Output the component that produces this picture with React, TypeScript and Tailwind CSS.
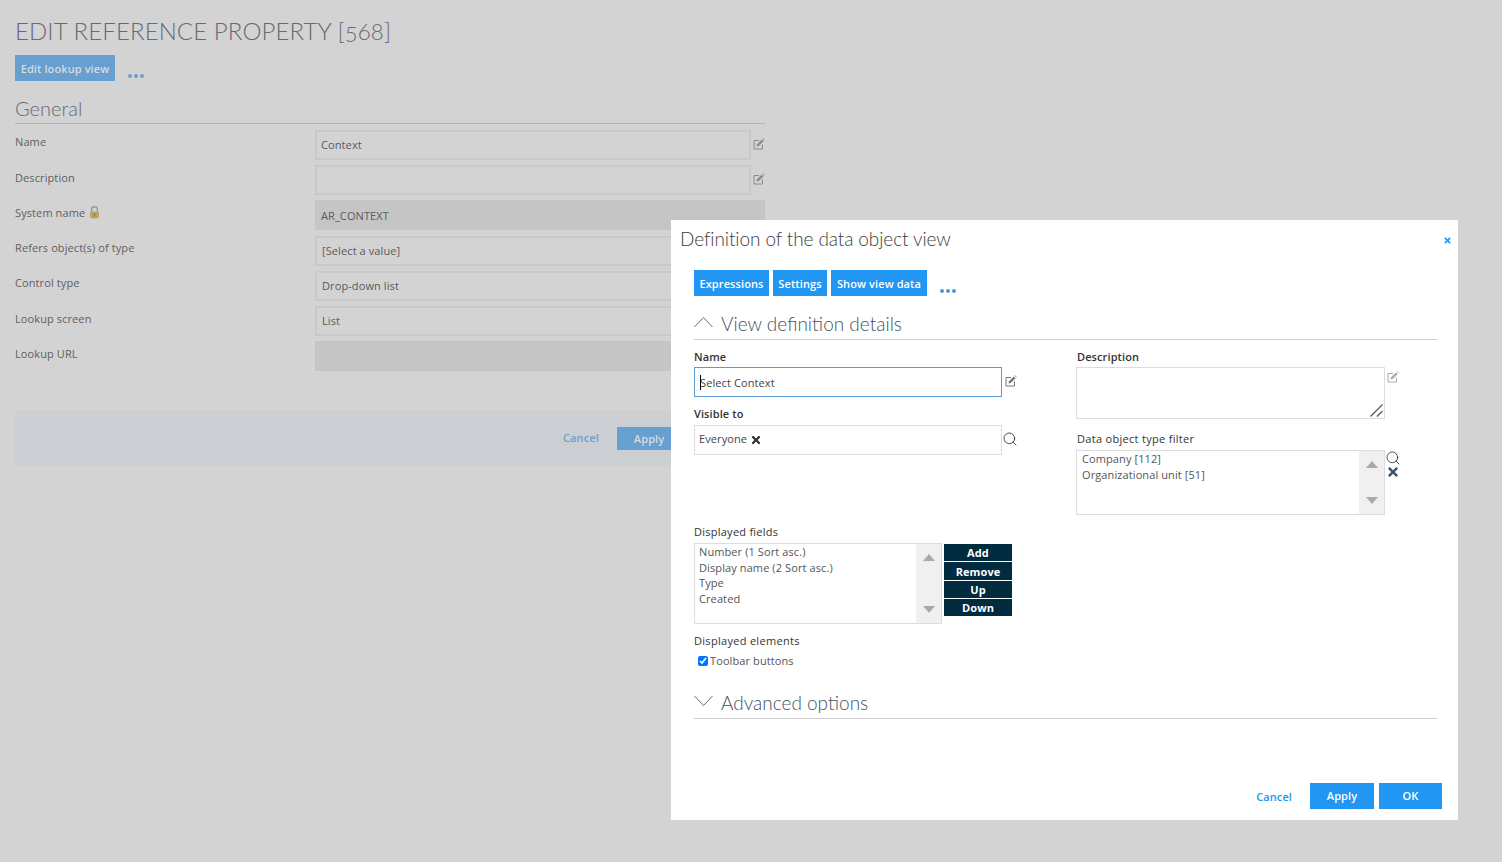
import React from "react";
import { FaTimes } from "react-icons/fa";
import { Search } from "lucide-react";

const leftRows = [
  { label: "Name", value: "Context", edit: true, pad: "pl-[4px]", labelPad: "" },
  { label: "Description", value: "", edit: true, pad: "pl-[4px]", labelPad: "pt-[1px]" },
  { label: "System name", value: "AR_CONTEXT", disabled: true, lock: true, pad: "pl-[4px] pt-[1px]", labelPad: "" },
  { label: "Refers object(s) of type", value: "[Select a value]", pad: "pl-[5px] pt-[1px]", labelPad: "" },
  { label: "Control type", value: "Drop-down list", pad: "pl-[5px]", labelPad: "" },
  { label: "Lookup screen", value: "List", pad: "pl-[5px]", labelPad: "pt-[1px]" },
  { label: "Lookup URL", value: "", disabled: true, pad: "pl-[5px]", labelPad: "pt-[1px]" },
];

const Dots = ({ className }: { className: string }) => (
  <div className={`flex gap-[2px] ${className}`}>
    <span className="w-[4px] h-[4px] rounded-full bg-current" />
    <span className="w-[4px] h-[4px] rounded-full bg-current" />
    <span className="w-[4px] h-[4px] rounded-full bg-current" />
  </div>
);

const Lock = () => (
  <svg width="11" height="13" viewBox="0 0 11 13" className="ml-[4px]">
    <path d="M2.5 6V3.8a3 3 0 0 1 6 0V6" fill="none" stroke="#9a9a8c" strokeWidth="1.4" />
    <rect x="1" y="5.5" width="9" height="7" rx="2.5" fill="#b8a661" />
    <rect x="4.8" y="7.5" width="1.4" height="3" fill="#8f8148" />
  </svg>
);

// square with a pencil leaving its top right corner
const EditIcon = ({ className }: { className: string }) => (
  <svg width="12" height="12" viewBox="0 0 12 12" className={className}>
    <path d="M6 2.5H1V11h8.5V6.5" fill="none" stroke="currentColor" strokeWidth="1" />
    <path d="M3.5 8.5 4 6.2 8.8 1.4 10.6 3.2 5.8 8z" fill="currentColor" />
    <path d="M9.5.7 10 .2 11.8 2 11.3 2.5z" fill="currentColor" />
  </svg>
);

const Scroller = () => (
  <div className="w-[25px] bg-[#f0f0f0] flex flex-col justify-between items-center py-[10px]">
    <div className="w-0 h-0 border-x-[6px] border-x-transparent border-b-[7px] border-b-[#a9a9a9]" />
    <div className="w-0 h-0 border-x-[6px] border-x-transparent border-t-[7px] border-t-[#a9a9a9]" />
  </div>
);

const Section = ({ title, open }: { title: string; open?: boolean }) => (
  <div className="flex items-start h-[29px] border-b border-[#cfcfcf] font-['Lato'] font-light text-[19px] leading-[26px] tracking-normal text-[#46525e]">
    <svg width="19" height="12" viewBox="0 0 19 12" className="mr-[8px] mt-[5px]">
      <polyline
        points={open ? "0.5,11 9.5,1.5 18.5,11" : "0.5,1 9.5,10.5 18.5,1"}
        fill="none"
        stroke="#6b6b6b"
        strokeWidth="1"
      />
    </svg>
    {title}
  </div>
);

const sideButtons = [
  { text: "Add", size: "h-[17px]" },
  { text: "Remove", size: "h-[18px]" },
  { text: "Up", size: "h-[17px]" },
  { text: "Down", size: "h-[17px]" },
];

export default function App() {
  return (
    <div className="relative w-[1502px] h-[862px] overflow-hidden bg-[#d3d3d3] font-['Open_Sans'] text-[11px] tracking-[0.1px] text-[#5a5a5a]">
      {/* Background page */}
      <div className="w-[750px] ml-[15px] pt-[16px]">
        <h1 className="font-['Lato'] font-light text-[24px] leading-[30px] tracking-[0.1px] oldstyle-nums text-[#666b70]">
          EDIT REFERENCE PROPERTY [568]
        </h1>
        <div className="flex items-end mt-[9px]">
          <button className="h-[26px] w-[100px] pt-[2px] bg-[#669fd0] text-[#d8dcdf] font-semibold">Edit lookup view</button>
          <Dots className="ml-[13px] mb-[3px] text-[#6f9fc8]" />
        </div>
        <div className="mt-[15px] h-[28px] border-b border-[#b4b4b4] font-['Lato'] font-light text-[20px] leading-[24px] tracking-normal text-[#6a6a6a]">
          General
        </div>
        <div className="mt-[6px] flex flex-col gap-[5.2px]">
          {leftRows.map((row) => (
            <div key={row.label} className="flex h-[30px]">
              <div className={`w-[300px] flex items-start text-[#5f5f5f] ${row.labelPad}`}>
                <span className="flex items-center h-[25px]">
                  {row.label}
                  {row.lock && <Lock />}
                </span>
              </div>
              <div
                className={`flex-1 flex items-center border-2 ${row.pad} ${
                  row.disabled ? "bg-[#c5c5c5] border-[#c5c5c5]" : "border-[#c9c9c9]"
                }`}
              >
                {row.value}
              </div>
              {row.edit && (
                <div className="w-[14px] flex justify-end pt-[8px] text-[#8b8b8b]">
                  <EditIcon className="shrink-0" />
                </div>
              )}
            </div>
          ))}
        </div>
        <div className="mt-[40px] h-[54px] pt-[1px] bg-[#cbced3] flex items-center pl-[548px]">
          <span className="text-[#6f9fc8] font-semibold">Cancel</span>
          <button className="ml-[18px] w-[66px] h-[23px] pt-[1px] bg-[#669fd0] text-[#d8dcdf] font-semibold text-left pl-[17px]">Apply</button>
        </div>
      </div>

      {/* Modal */}
      <div className="absolute left-[671px] top-[220px] w-[787px] h-[600px] bg-white flex flex-col text-[#444]">
        <div className="flex items-start justify-between pl-[9px] pr-[6px] pt-[6px]">
          <h2 className="font-['Lato'] font-light text-[19px] leading-[26px] tracking-[-0.1px] text-[#3c3c3c]">Definition of the data object view</h2>
          <FaTimes size={9} className="text-[#2196f3] mt-[10px]" />
        </div>

        <div className="mx-[23px] w-[743px] flex-1 flex flex-col">
          <div className="flex items-end mt-[18px] gap-[4px]">
            <button className="h-[26px] w-[75px] pt-[2px] bg-[#2196f3] text-white font-semibold">Expressions</button>
            <button className="h-[26px] w-[54px] pt-[2px] bg-[#2196f3] text-white font-semibold">Settings</button>
            <button className="h-[26px] w-[96px] pt-[2px] bg-[#2196f3] text-white font-semibold">Show view data</button>
            <Dots className="ml-[9px] mb-[3px] text-[#4f96d3]" />
          </div>

          <div className="mt-[15px]">
            <Section title="View definition details" open />
          </div>

          <div className="grid grid-cols-[382px_1fr] mt-[9px]">
            <div>
              <label className="block h-[18px] font-semibold text-[#333]">Name</label>
              <div className="flex">
                <div className="w-[308px] h-[30px] border border-[#5b9bd5] flex items-center pl-[5px] pt-[2px] relative">
                  <span className="absolute left-[5px] top-[7px] w-px h-[15px] bg-black" />
                  Select Context
                </div>
                <EditIcon className="ml-[3px] mt-[8px] text-[#777]" />
              </div>
              <label className="block mt-[9px] h-[19px] font-semibold text-[#333]">Visible to</label>
              <div className="flex">
                <div className="w-[308px] h-[30px] border border-[#ddd] flex items-center pl-[4px] pb-[1px]">
                  Everyone
                  <FaTimes size={12} className="ml-[3px] text-[#333]" />
                </div>
                <Search size={16} strokeWidth={1.2} className="mt-[6px] text-[#222]" />
              </div>
            </div>
            <div className="pl-[1px]">
              <label className="block h-[18px] font-semibold text-[#333]">Description</label>
              <div className="flex ml-[-1px]">
                <div className="relative w-[309px] h-[52px] border border-[#ddd]">
                  <svg width="13" height="13" viewBox="0 0 13 13" className="absolute right-[1px] bottom-[1px]">
                    <path d="M0.5 12.5 12.5 0.5M7 12.5l5.5-5.5" stroke="#555" strokeWidth="1.2" />
                  </svg>
                </div>
                <EditIcon className="ml-[2px] mt-[4px] text-[#aaa]" />
              </div>
              <label className="block mt-[12px] h-[19px] font-medium tracking-[0.3px] text-[#333]">Data object type filter</label>
              <div className="flex ml-[-1px]">
                <div className="w-[309px] h-[65px] border border-[#ddd] flex">
                  <div className="flex-1 pl-[5px] leading-[16px] text-[#555]">
                    <div>Company [112]</div>
                    <div>Organizational unit [51]</div>
                  </div>
                  <Scroller />
                </div>
                <div className="flex flex-col items-start">
                  <Search size={16} strokeWidth={1.2} className="text-[#222]" />
                  <FaTimes size={14} className="text-[#3f5468] ml-[1px] mt-[-1px]" />
                </div>
              </div>
            </div>
          </div>

          <label className="block mt-[9px] h-[19px] font-medium tracking-[0.25px] text-[#333]">Displayed fields</label>
          <div className="flex">
            <div className="w-[248px] h-[81px] border border-[#ddd] flex">
              <div className="flex-1 pl-[4px] leading-[15.7px] text-[#555]">
                <div>Number (1 Sort asc.)</div>
                <div>Display name (2 Sort asc.)</div>
                <div>Type</div>
                <div>Created</div>
              </div>
              <Scroller />
            </div>
            <div className="ml-[2px] mt-[1px] w-[68px] flex flex-col gap-[1px]">
              {sideButtons.map((b) => (
                <button key={b.text} className={`${b.size} leading-[17px] bg-[#012b3f] text-white font-bold`}>
                  {b.text}
                </button>
              ))}
            </div>
          </div>

          <label className="block mt-[9px] h-[18px] font-medium tracking-[0.3px] text-[#333]">Displayed elements</label>
          <div className="flex items-center h-[16px] mt-[2px] pl-[4px] text-[#555]">
            <input type="checkbox" defaultChecked className="w-[10px] h-[10px] m-0 accent-[#0075ff]" />
            <span className="ml-[2px]">Toolbar buttons</span>
          </div>

          <div className="mt-[21px]">
            <Section title="Advanced options" />
          </div>
        </div>

        <div className="flex items-center justify-end pr-[16px] pb-[11px] gap-[5px]">
          <span className="mr-[13px] pt-[2px] text-[#2196f3] font-semibold">Cancel</span>
          <button className="w-[64px] h-[26px] pt-[1px] bg-[#2196f3] text-white font-semibold">Apply</button>
          <button className="w-[63px] h-[26px] pt-[1px] bg-[#2196f3] text-white font-semibold">OK</button>
        </div>
      </div>
    </div>
  );
}
